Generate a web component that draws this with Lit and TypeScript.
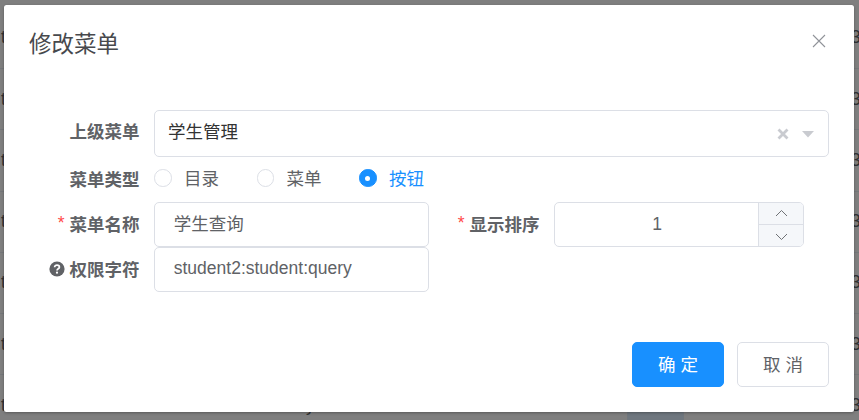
import { LitElement, html, css } from "lit";
import { customElement } from "lit/decorators.js";

@customElement("app-root")
export class AppRoot extends LitElement {
  static styles = css`
    :host { display: block; position: relative; width: 859px; height: 420px; overflow: hidden; background: #fff; font-family: "Liberation Sans", "Noto Sans CJK SC", sans-serif; color: #606266; font-size: 17.5px; }
    .table { padding-top: 7.75px; }
    .tr { height: 61.25px; box-sizing: border-box; border-bottom: 1px solid #ebeef5; display: grid; grid-template-columns: 306px 321px 224px 8px; align-items: center; white-space: nowrap; font-size: 17.5px; }
    .t { padding-left: 1px; }
    .mini { width: 57px; height: 46px; background: #dfeeff; border: 1px solid #e2eefb; box-sizing: border-box; }
    .overlay { position: absolute; inset: 0; background: rgba(0,0,0,.5); padding: 5px 5px 8px 4px; box-sizing: border-box; display: flex; }
    .dialog { flex: 1; background: #fff; border-radius: 2.5px; box-shadow: 0 1px 3px rgba(0,0,0,.3); display: flex; flex-direction: column; box-sizing: border-box; }
    .head { display: flex; justify-content: space-between; align-items: center; padding: 23px 25px 0 25px; height: 34px; }
    .title { font-size: 22.5px; color: #47494d; line-height: 34px; }
    .close { display: block; width: 14px; height: 14px; margin-right: 3px; margin-top: -8px; }
    .body { flex: 1; padding: 48px 25px 0; }
    .row { display: flex; align-items: center; }
    .row.sel { height: 47px; }
    .row.radios { height: 45px; box-sizing: border-box; padding-bottom: 3px; }
    .row.inp { height: 45px; }
    .half { display: flex; align-items: center; width: 400px; }
    .label { width: 125px; flex: none; box-sizing: border-box; padding-right: 14.5px; display: flex; justify-content: flex-end; align-items: center; font-weight: 700; font-size: 17.5px; white-space: nowrap; }
    .row.inp .label { padding-bottom: 2px; }
    .row.sel .label { padding-bottom: 6px; }
    .req { color: #ff4949; margin-right: 5px; font-weight: 400; }
    .qicon { width: 16px; height: 16px; margin-right: 5px; display: block; }
    .select { flex: 1; height: 47px; border: 1px solid #dcdfe6; border-radius: 5px; box-sizing: border-box; display: flex; align-items: center; padding: 0 13px 0 13px; color: #333; }
    .select .v { flex: 1; padding-bottom: 7px; }
    .sel-x { width: 12px; height: 12px; display: block; margin-right: 12px; }
    .sel-c { width: 14px; height: 8px; display: block; }
    .radio { display: flex; align-items: center; margin-right: 37.5px; }
    .radio .txt { padding-bottom: 2px; }
    .dot { width: 17.5px; height: 17.5px; box-sizing: border-box; border: 1px solid #dcdfe6; border-radius: 50%; margin-right: 12.5px; display: flex; align-items: center; justify-content: center; background: #fff; }
    .radio.on { color: #1890ff; }
    .radio.on .dot { background: #1890ff; border-color: #1890ff; }
    .radio.on .dot::after { content: ""; width: 5px; height: 5px; border-radius: 50%; background: #fff; }
    .input { width: 275px; height: 45px; border: 1px solid #dcdfe6; border-radius: 5px; box-sizing: border-box; padding: 0 18.75px 2px; display: flex; align-items: center; flex: none; }
    .input.cjk { padding-bottom: 4px; }
    .num { width: 250px; height: 45px; border: 1px solid #dcdfe6; border-radius: 5px; box-sizing: border-box; display: flex; flex: none; overflow: hidden; }
    .num .nv { flex: 1; display: flex; align-items: center; justify-content: center; padding-left: 1px; }
    .steps { width: 45px; flex: none; border-left: 1px solid #dcdfe6; background: #f5f7fa; display: flex; flex-direction: column; box-sizing: border-box; }
    .step { flex: 1; display: flex; align-items: center; justify-content: center; }
    .step:first-child { padding-bottom: 2px; }
    .step + .step { border-top: 1px solid #dcdfe6; padding-top: 2px; }
    .step svg { width: 13px; height: 8px; display: block; }
    .foot { display: flex; justify-content: flex-end; gap: 13px; padding: 0 25px 25px; }
    .btn { width: 92px; height: 45px; box-sizing: border-box; border-radius: 5px; border: 1px solid #dcdfe6; display: flex; align-items: center; justify-content: center; white-space: pre; padding-bottom: 2px; }
    .btn.primary { background: #1890ff; border-color: #1890ff; color: #fff; }
  `;

  render() {
    const rows = [0, 1, 2, 3, 4, 5, 6];
    return html`
      <div class="table">
        ${rows.map(
          (i) => html`<div class="tr">
            <span class="t">t</span>
            <span>${i === 6 ? "y" : ""}</span>
            <span>${i === 6 ? html`<div class="mini"></div>` : ""}</span>
            <span>3</span>
          </div>`
        )}
      </div>
      <div class="overlay">
        <div class="dialog">
          <div class="head">
            <div class="title">修改菜单</div>
            <svg class="close" viewBox="0 0 14 14"><path d="M1 1L13 13M13 1L1 13" stroke="#909399" stroke-width="1.1" fill="none"/></svg>
          </div>
          <div class="body">
            <div class="row sel">
              <div class="label">上级菜单</div>
              <div class="select">
                <span class="v">学生管理</span>
                <svg class="sel-x" viewBox="0 0 12 12"><path d="M1.5 1.5L10.5 10.5M10.5 1.5L1.5 10.5" stroke="#c9cbd0" stroke-width="2.8" fill="none"/></svg>
                <svg class="sel-c" viewBox="0 0 14 8"><path d="M1 1H13L7 7.5Z" fill="#c9cbd0"/></svg>
              </div>
            </div>
            <div class="row radios">
              <div class="label">菜单类型</div>
              <div class="radio"><span class="dot"></span><span class="txt">目录</span></div>
              <div class="radio"><span class="dot"></span><span class="txt">菜单</span></div>
              <div class="radio on"><span class="dot"></span><span class="txt">按钮</span></div>
            </div>
            <div class="row inp">
              <div class="half">
                <div class="label"><span class="req">*</span>菜单名称</div>
                <div class="input cjk">学生查询</div>
              </div>
              <div class="half">
                <div class="label"><span class="req">*</span>显示排序</div>
                <div class="num">
                  <div class="nv">1</div>
                  <div class="steps">
                    <div class="step"><svg viewBox="0 0 13 8"><path d="M1 7L6.5 1.5L12 7" stroke="#606266" stroke-width="0.9" fill="none"/></svg></div>
                    <div class="step"><svg viewBox="0 0 13 8"><path d="M1 1L6.5 6.5L12 1" stroke="#606266" stroke-width="0.9" fill="none"/></svg></div>
                  </div>
                </div>
              </div>
            </div>
            <div class="row inp">
              <div class="half">
                <div class="label">
                  <svg class="qicon" viewBox="0 0 16 16"><circle cx="8" cy="8" r="7.6" fill="#606266"/><path d="M5.6 6.3C5.6 4.9 6.7 4.2 8 4.2C9.4 4.2 10.4 5 10.4 6.2C10.4 7.7 8 7.8 8 9.4" stroke="#fff" stroke-width="1.7" fill="none"/><circle cx="8" cy="11.7" r="1.1" fill="#fff"/></svg>权限字符
                </div>
                <div class="input">student2:student:query</div>
              </div>
            </div>
          </div>
          <div class="foot">
            <div class="btn primary">确 定</div>
            <div class="btn">取 消</div>
          </div>
        </div>
      </div>
    `;
  }
}
